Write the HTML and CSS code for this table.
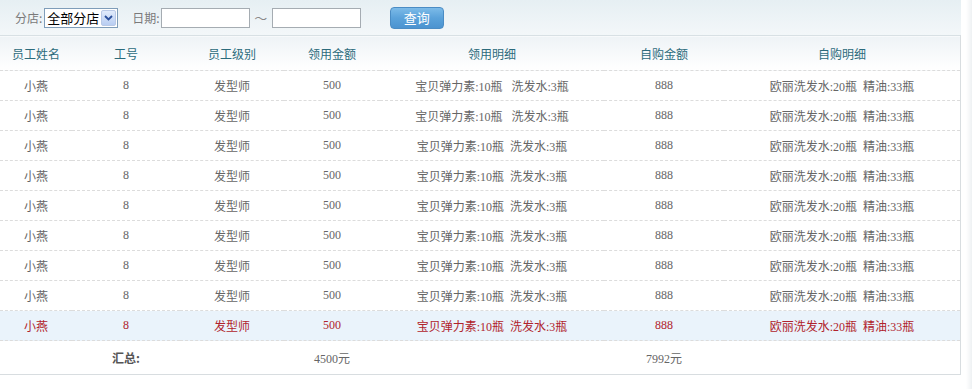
FILE: index.html
```html
<!DOCTYPE html>
<html lang="zh-CN">
<head>
<meta charset="utf-8">
<title>领用明细</title>
<link rel="stylesheet" href="styles.css">
</head>
<body>
<div class="page">
  <div class="toolbar">
    <span class="lbl lbl-shop">分店:</span>
    <div class="select">
      <span class="select-text">全部分店</span>
      <span class="select-btn">
        <svg width="9" height="6" viewBox="0 0 9 6"><path d="M1 1 L4.5 4.5 L8 1" fill="none" stroke="#2b4f9b" stroke-width="1.8"/></svg>
      </span>
    </div>
    <span class="lbl lbl-date">日期:</span>
    <input class="date" type="text">
    <span class="tilde">～</span>
    <input class="date" type="text">
    <button class="btn" type="button">查询</button>
  </div>
  <table class="grid">
    <colgroup>
      <col class="c1"><col class="c2"><col class="c3"><col class="c4"><col class="c5"><col class="c6"><col class="c7">
    </colgroup>
    <thead>
      <tr><th>员工姓名</th><th>工号</th><th>员工级别</th><th>领用金额</th><th>领用明细</th><th>自购金额</th><th>自购明细</th></tr>
    </thead>
    <tbody>
      <tr><td>小燕</td><td>8</td><td>发型师</td><td>500</td><td class="d5w">宝贝弹力素:10瓶&nbsp;&nbsp;&nbsp;洗发水:3瓶</td><td>888</td><td>欧丽洗发水:20瓶&nbsp;&nbsp;精油:33瓶</td></tr>
      <tr><td>小燕</td><td>8</td><td>发型师</td><td>500</td><td class="d5w">宝贝弹力素:10瓶&nbsp;&nbsp;&nbsp;洗发水:3瓶</td><td>888</td><td>欧丽洗发水:20瓶&nbsp;&nbsp;精油:33瓶</td></tr>
      <tr><td>小燕</td><td>8</td><td>发型师</td><td>500</td><td>宝贝弹力素:10瓶&nbsp;&nbsp;洗发水:3瓶</td><td>888</td><td>欧丽洗发水:20瓶&nbsp;&nbsp;精油:33瓶</td></tr>
      <tr><td>小燕</td><td>8</td><td>发型师</td><td>500</td><td>宝贝弹力素:10瓶&nbsp;&nbsp;洗发水:3瓶</td><td>888</td><td>欧丽洗发水:20瓶&nbsp;&nbsp;精油:33瓶</td></tr>
      <tr><td>小燕</td><td>8</td><td>发型师</td><td>500</td><td>宝贝弹力素:10瓶&nbsp;&nbsp;洗发水:3瓶</td><td>888</td><td>欧丽洗发水:20瓶&nbsp;&nbsp;精油:33瓶</td></tr>
      <tr><td>小燕</td><td>8</td><td>发型师</td><td>500</td><td>宝贝弹力素:10瓶&nbsp;&nbsp;洗发水:3瓶</td><td>888</td><td>欧丽洗发水:20瓶&nbsp;&nbsp;精油:33瓶</td></tr>
      <tr><td>小燕</td><td>8</td><td>发型师</td><td>500</td><td>宝贝弹力素:10瓶&nbsp;&nbsp;洗发水:3瓶</td><td>888</td><td>欧丽洗发水:20瓶&nbsp;&nbsp;精油:33瓶</td></tr>
      <tr><td>小燕</td><td>8</td><td>发型师</td><td>500</td><td>宝贝弹力素:10瓶&nbsp;&nbsp;洗发水:3瓶</td><td>888</td><td>欧丽洗发水:20瓶&nbsp;&nbsp;精油:33瓶</td></tr>
      <tr class="hl"><td>小燕</td><td>8</td><td>发型师</td><td>500</td><td>宝贝弹力素:10瓶&nbsp;&nbsp;洗发水:3瓶</td><td>888</td><td>欧丽洗发水:20瓶&nbsp;&nbsp;精油:33瓶</td></tr>
    </tbody>
    <tfoot>
      <tr><td></td><td class="sum-lbl">汇总:</td><td></td><td>4500元</td><td></td><td>7992元</td><td></td></tr>
    </tfoot>
  </table>
</div>
</body>
</html>
```

FILE: styles.css
```css
html, body {
  margin: 0;
  padding: 0;
  background: #ffffff;
}
body {
  font-family: "Liberation Serif", "Noto Sans CJK SC", serif;
  font-size: 12px;
  color: #666;
}
.page {
  width: 972px;
  height: 389px;
  background: linear-gradient(to right, #ffffff 0, #ffffff 966px, #eef1f3 972px);
}
.toolbar {
  height: 35px;
  box-sizing: border-box;
  display: flex;
  align-items: center;
  padding-left: 15px;
  width: 961px;
  background: linear-gradient(to bottom, #e6eff3 0%, #f3f7f9 100%);
}
.lbl {
  color: #7a7a7a;
  font-size: 12px;
  font-family: "Noto Sans CJK SC", sans-serif;
  line-height: 20px;
}
.lbl-shop { margin-right: 2px; }
.select {
  width: 74px;
  height: 20px;
  box-sizing: border-box;
  border: 1px solid #7f9db9;
  background: #fff;
  display: flex;
  align-items: center;
  justify-content: space-between;
  padding: 1px 1px 1px 2px;
}
.select-text {
  color: #000;
  font-family: "Noto Sans CJK SC", sans-serif;
  font-size: 13px;
  line-height: 16px;
}
.select-btn {
  width: 15px;
  height: 16px;
  box-sizing: border-box;
  border: 1px solid #b9c9e6;
  border-radius: 2px;
  background: linear-gradient(to bottom, #e1ebfb, #b8cdf2);
  display: flex;
  align-items: center;
  justify-content: center;
}
.lbl-date { margin-left: 14px; margin-right: 1px; }
.date {
  width: 89px;
  height: 20px;
  box-sizing: border-box;
  border: 1px solid #a5acb2;
  background: #fff;
  margin: 0;
  padding: 0;
}
.tilde {
  color: #888;
  width: 22px;
  text-align: center;
  font-family: "Noto Sans CJK SC", sans-serif;
  font-size: 13px;
}
.btn {
  margin-left: 29px;
  width: 54px;
  height: 22px;
  box-sizing: border-box;
  border: 1px solid #4a8cc4;
  border-radius: 4px;
  background: linear-gradient(to bottom, #7cbbe8 0%, #5aa2da 50%, #4b93d0 100%);
  color: #fff;
  font-family: "Noto Sans CJK SC", sans-serif;
  font-size: 13px;
  line-height: 18px;
  padding: 0;
}
.grid {
  width: 961px;
  border-collapse: collapse;
  table-layout: fixed;
  border-top: 1px solid #d8e0e4;
  border-right: 1px solid #d8dde0;
  border-bottom: 1px solid #d8dde0;
}
.c1 { width: 72px; }
.c2 { width: 108px; }
.c3 { width: 104px; }
.c4 { width: 96px; }
.c5 { width: 224px; }
.c6 { width: 120px; }
.c7 { width: auto; }
.grid th {
  height: 34px;
  padding: 0;
  font-weight: normal;
  color: #2c6b7c;
  font-family: "Noto Sans CJK SC", sans-serif;
  font-size: 12px;
  text-align: center;
  background: linear-gradient(to bottom, #eef3f6 0%, #ffffff 100%);
  border-bottom: 1px dashed #dcdcdc;
}
.grid td {
  height: 29px;
  padding: 0;
  text-align: center;
  color: #666;
  white-space: nowrap;
  border-bottom: 1px dashed #dcdcdc;
}
.grid tbody tr.hl td {
  background: #eaf3fb;
  color: #b0232c;
}
.grid tfoot td {
  border-bottom: none;
  height: 33px;
  padding-bottom: 0;
  vertical-align: middle;
}
.grid tfoot td.sum-lbl {
  font-weight: bold;
  color: #555;
  font-family: "Noto Sans CJK SC", sans-serif;
}
```
